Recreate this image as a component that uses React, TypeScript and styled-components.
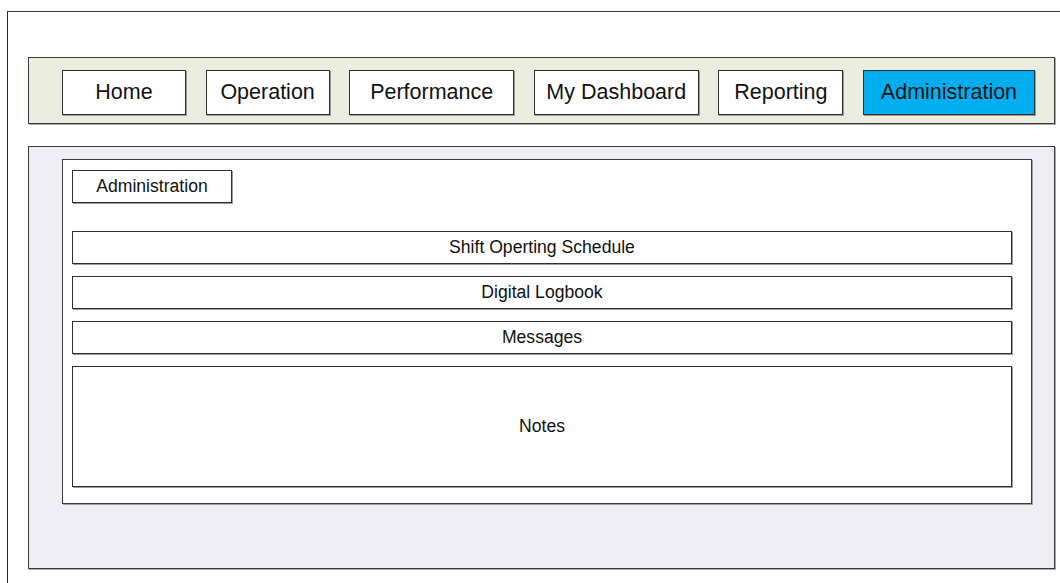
import React from "react";
import styled, { createGlobalStyle } from "styled-components";

const GlobalStyle = createGlobalStyle`
  html, body {
    margin: 0;
    padding: 0;
    background: #ffffff;
    overflow: hidden;
  }
  body {
    font-family: "Liberation Sans", Arial, sans-serif;
    color: #111;
  }
`;

/* Window frame: only its top and left edges show; it runs off the page */
const Frame = styled.div`
  box-sizing: border-box;
  margin: 11px 0 0 7px;
  width: 1053px;
  height: 572px;
  overflow: hidden;
  border-left: 1px solid #2a2a2a;
  border-top: 1px solid #3a3a3a;
  padding: 45px 0 0 20px;
`;

const NavBar = styled.nav`
  box-sizing: border-box;
  width: 1027px;
  height: 67px;
  background: #ebeddf;
  border: 1px solid #3a3a3a;
  box-shadow: 1px 1px 0 #a8a8a8;
  display: flex;
  align-items: flex-start;
  gap: 19.6px;
  padding: 12px 0 0 33px;
`;

const NavButton = styled.button<{ $w: number; $active?: boolean }>`
  box-sizing: border-box;
  width: ${(p) => p.$w}px;
  height: 45px;
  margin: 0;
  padding: 0;
  border: 1px solid #2e2e2e;
  box-shadow: 1px 1px 0 #9a9a9a;
  background: ${(p) => (p.$active ? "#00aeef" : "#ffffff")};
  font-family: "Liberation Sans", Arial, sans-serif;
  font-size: 21.5px;
  color: #111;
  display: flex;
  align-items: center;
  justify-content: center;
  cursor: pointer;
`;

const Panel = styled.main`
  box-sizing: border-box;
  margin-top: 22px;
  width: 1027px;
  height: 423px;
  background: #efeef4;
  border: 1px solid #3a3a3a;
  box-shadow: 1px 1px 0 #a8a8a8;
  padding: 12px 0 0 33px;
`;

const Card = styled.section`
  box-sizing: border-box;
  width: 970px;
  height: 345px;
  background: #ffffff;
  border: 1px solid #3a3a3a;
  box-shadow: 1px 1px 0 #a0a0a0;
  padding: 10px 0 0 9px;
  display: flex;
  flex-direction: column;
  align-items: flex-start;
`;

const Title = styled.div`
  box-sizing: border-box;
  width: 160px;
  height: 33px;
  border: 1px solid #2e2e2e;
  box-shadow: 1px 1px 0 #9a9a9a;
  display: flex;
  align-items: center;
  justify-content: center;
  font-size: 17.6px;
  margin-bottom: 28px;
`;

const Sections = styled.div`
  display: flex;
  flex-direction: column;
  gap: 12px;
`;

const Section = styled.div<{ $h: number }>`
  box-sizing: border-box;
  width: 940px;
  height: ${(p) => p.$h}px;
  border: 1px solid #2e2e2e;
  box-shadow: 1px 1px 0 #9a9a9a;
  display: flex;
  align-items: center;
  justify-content: center;
  font-size: 17.6px;
  padding-bottom: 1px;
`;

const navItems = [
  { label: "Home", w: 124 },
  { label: "Operation", w: 124 },
  { label: "Performance", w: 165 },
  { label: "My Dashboard", w: 165 },
  { label: "Reporting", w: 125 },
  { label: "Administration", w: 172, active: true },
];

const sections = [
  { label: "Shift Operting Schedule", h: 33 },
  { label: "Digital Logbook", h: 33 },
  { label: "Messages", h: 33 },
  { label: "Notes", h: 121 },
];

export default function App() {
  return (
    <>
      <GlobalStyle />
      <Frame>
        <NavBar>
          {navItems.map((n) => (
            <NavButton key={n.label} $w={n.w} $active={n.active}>
              {n.label}
            </NavButton>
          ))}
        </NavBar>
        <Panel>
          <Card>
            <Title>Administration</Title>
            <Sections>
              {sections.map((s) => (
                <Section key={s.label} $h={s.h}>
                  {s.label}
                </Section>
              ))}
            </Sections>
          </Card>
        </Panel>
      </Frame>
    </>
  );
}
